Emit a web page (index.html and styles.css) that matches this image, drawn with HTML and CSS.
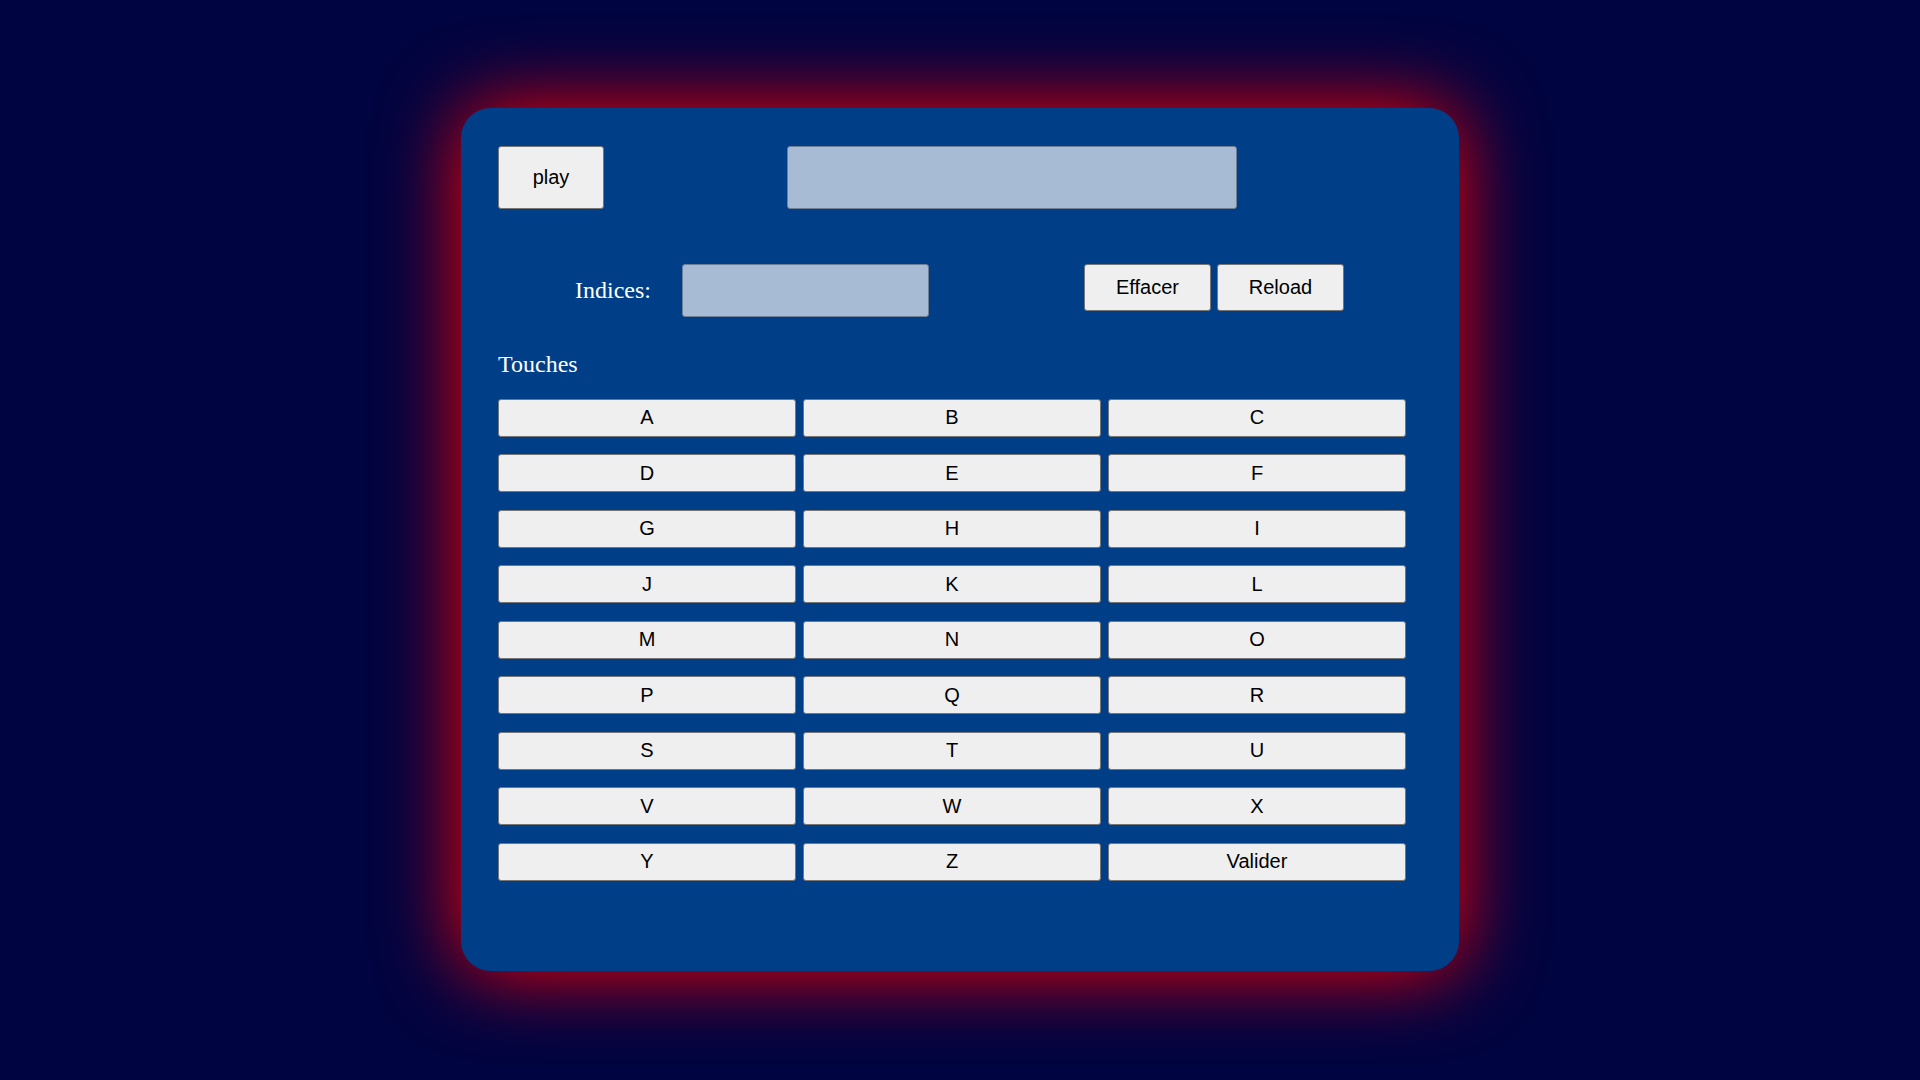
FILE: index.html
```html
<!DOCTYPE html>
<html lang="fr">
<head>
    <meta charset="UTF-8">
    <meta name="viewport" content="width=device-width, initial-scale=1.0">
    <title>Pendu</title>
    <link rel="stylesheet" href="styles.css">
</head>
<body>
    <div class="container">
        <!-- Ligne du haut : lancer le jeu + mot -->
        <div class="top-row">
            <button class="btn play-btn" type="button">play</button>
            <input class="field word-field" type="text" id="mot" readonly>
        </div>

        <!-- Indices et actions -->
        <div class="clue-row">
            <label class="clue-label" for="indices">Indices:</label>
            <input class="field clue-field" type="text" id="indices" readonly>
            <button class="btn action-btn erase-btn" type="button">Effacer</button>
            <button class="btn action-btn" type="button">Reload</button>
        </div>

        <h3 class="keys-title">Touches</h3>
        <div class="keys">
            <button class="btn key">A</button>
            <button class="btn key">B</button>
            <button class="btn key">C</button>
            <button class="btn key">D</button>
            <button class="btn key">E</button>
            <button class="btn key">F</button>
            <button class="btn key">G</button>
            <button class="btn key">H</button>
            <button class="btn key">I</button>
            <button class="btn key">J</button>
            <button class="btn key">K</button>
            <button class="btn key">L</button>
            <button class="btn key">M</button>
            <button class="btn key">N</button>
            <button class="btn key">O</button>
            <button class="btn key">P</button>
            <button class="btn key">Q</button>
            <button class="btn key">R</button>
            <button class="btn key">S</button>
            <button class="btn key">T</button>
            <button class="btn key">U</button>
            <button class="btn key">V</button>
            <button class="btn key">W</button>
            <button class="btn key">X</button>
            <button class="btn key">Y</button>
            <button class="btn key">Z</button>
            <button class="btn key">Valider</button>
        </div>
    </div>
</body>
</html>
```

FILE: styles.css
```css
body {
    margin: 0;
    box-sizing: border-box;
    min-height: 100vh;
    padding-bottom: 2px;
    background-color: #000440;
    font-family: "Liberation Serif", "Times New Roman", serif;
    display: flex;
    align-items: center;
    justify-content: center;
}
.container {
    box-sizing: border-box;
    width: 998px;
    height: 863px;
    padding: 38px 54px 0 37px;
    background-color: #003f88;
    border-radius: 30px;
    box-shadow: 0 0 80px red;
}
.btn {
    box-sizing: border-box;
    font-family: "Liberation Sans", Arial, sans-serif;
    font-size: 20px;
    color: #000;
    background-color: #efefef;
    border: 1px solid #767676;
    border-radius: 3px;
    padding: 0;
    cursor: pointer;
}
.btn:hover {
    background-color: #e5e5e5;
}
.field {
    box-sizing: border-box;
    background-color: #a8bbd4;
    border: 1px solid #6f7f95;
    border-radius: 3px;
    font-size: 20px;
    margin: 0;
}
.top-row {
    display: flex;
    align-items: center;
    height: 63px;
}
.play-btn {
    width: 106px;
    height: 63px;
}
.word-field {
    width: 450px;
    height: 63px;
    margin-left: 183px;
}
.clue-row {
    display: flex;
    align-items: center;
    margin-top: 55px;
    height: 53px;
}
.clue-label {
    color: white;
    font-size: 24px;
    margin-left: 77px;
    width: 107px;
}
.clue-field {
    width: 247px;
    height: 53px;
}
.action-btn {
    align-self: flex-start;
    width: 127px;
    height: 47px;
    margin-left: 6px;
}
.erase-btn {
    margin-left: 155px;
}
.keys-title {
    color: white;
    font-size: 24px;
    font-weight: normal;
    line-height: 24px;
    margin: 35px 0 23px 0;
}
.keys {
    display: grid;
    grid-template-columns: repeat(3, 298px);
    grid-auto-rows: 38px;
    column-gap: 7px;
    row-gap: 17.5px;
}
```
